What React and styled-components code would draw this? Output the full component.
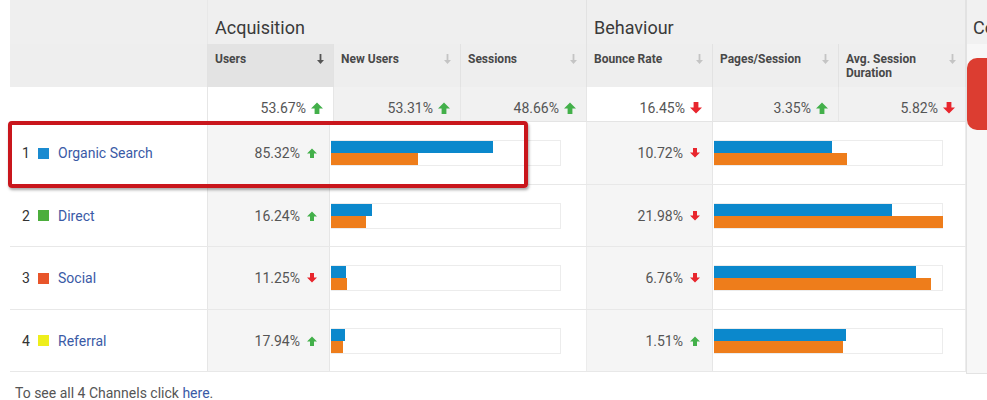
import React from 'react';
import styled, { createGlobalStyle } from 'styled-components';

const Global = createGlobalStyle`
  html, body { margin: 0; padding: 0; background: #fff; }
  body { font-family: Roboto, "Liberation Sans", Arial, sans-serif; width: 987px; height: 400px; overflow: hidden; }
  #root { width: 987px; height: 400px; }
`;

const Page = styled.div`
  position: relative;
  width: 987px;
  height: 400px;
  overflow: hidden;
`;

const Top = styled.div`
  display: flex;
  padding-left: 10px;
`;

const Table = styled.div`
  width: 956px;
  flex: none;
  display: flex;
  flex-direction: column;
`;

const GroupRow = styled.div`
  display: grid;
  grid-template-columns: 198px 379px 379px;
  height: 44px;
  background: #efefef;
`;

const GroupCell = styled.div`
  box-sizing: border-box;
  border-right: 1px solid #e2e2e2;
  font-size: 18px;
  color: #3a3a3a;
  padding: 17px 0 0 7px;
  &:first-child { border-right: 1px solid #e8e8e8; }
`;

const HeaderRow = styled.div`
  display: grid;
  grid-template-columns: 198px 126px 127px 126px 126px 126px 127px;
  height: 43px;
  background: #eeeeee;
`;

const HeadCell = styled.div`
  box-sizing: border-box;
  border-right: 1px solid #e2e2e2;
  background: ${p => (p.$active ? '#e3e3e3' : '#eeeeee')};
  display: flex;
  justify-content: space-between;
  align-items: flex-start;
  padding: 8px 9px 0 7px;
  font-size: 12px;
  font-weight: 700;
  line-height: 14px;
  color: #484848;
`;

const SummaryRow = styled.div`
  display: grid;
  grid-template-columns: 198px 126px 127px 126px 126px 126px 127px;
  height: 35px;
  border-bottom: 1px solid #e4e4e4;
  box-sizing: border-box;
`;

const SumCell = styled.div`
  box-sizing: border-box;
  border-right: 1px solid #e6e6e6;
  background: ${p => (p.$white ? '#ffffff' : '#f1f1f1')};
  display: flex;
  align-items: center;
  justify-content: flex-end;
  gap: 5px;
  padding: 8px 10px 0 0;
  font-size: 14px;
  color: #555;
`;

const BodyRow = styled.div`
  display: grid;
  grid-template-columns: 198px 122px 257px 126px 253px;
  height: ${p => p.$h}px;
  border-bottom: 1px solid #e8e8e8;
  box-sizing: border-box;
`;

const LabelCell = styled.div`
  box-sizing: border-box;
  border-right: 1px solid #e6e6e6;
  background: #fff;
  display: flex;
  align-items: center;
  padding: 0 0 0 12px;
  font-size: 14px;
  color: #333;
`;

const Num = styled.span`
  width: 16px;
`;

const Swatch = styled.span`
  width: 11px;
  height: 11px;
  background: ${p => p.$c};
  margin-right: 9px;
  flex: none;
`;

const Link = styled.a`
  color: #3a5aa6;
  text-decoration: none;
`;

const PctCell = styled.div`
  box-sizing: border-box;
  border-right: 1px solid #e6e6e6;
  background: #f5f5f5;
  display: flex;
  align-items: center;
  justify-content: flex-end;
  gap: 7px;
  padding: 0 12px 0 0;
  font-size: 14px;
  color: #555;
`;

const BarCell = styled.div`
  box-sizing: border-box;
  border-right: 1px solid #ececec;
  background: #fff;
  display: flex;
  align-items: center;
  padding-left: 1px;
`;

const BarBox = styled.div`
  width: ${p => p.$w}px;
  height: 26px;
  box-sizing: border-box;
  border: 1px solid #ececec;
  border-left: none;
  display: flex;
  flex-direction: column;
  justify-content: center;
`;

const Bar = styled.div`
  height: 12px;
  background: ${p => (p.$kind === 'a' ? '#0b88cc' : '#ee7d1b')};
`;

const Side = styled.div`
  flex: 1;
  min-width: 0;
  display: flex;
  flex-direction: column;
  border-left: 1px solid #e2e2e2;
  overflow: hidden;
`;

const SideHead = styled.div`
  height: 44px;
  background: #f1f1f1;
  font-size: 18px;
  color: #3a3a3a;
  padding: 17px 0 0 6px;
  box-sizing: border-box;
  white-space: nowrap;
`;

const SidePanel = styled.div`
  height: 330px;
  background: #f7f7f7;
  border-bottom: 1px solid #e3e3e3;
  box-sizing: border-box;
  padding: 14px 0 0 0;
`;

const RedButton = styled.div`
  height: 72px;
  width: 60px;
  background: #dc3d31;
  border-radius: 10px;
`;

const Footer = styled.div`
  padding: 11px 0 0 15px;
  font-size: 14px;
  color: #555;
`;

const Highlight = styled.div`
  position: absolute;
  left: 8px;
  top: 121px;
  width: 520px;
  height: 67px;
  box-sizing: border-box;
  border: 4px solid #c9161c;
  border-radius: 4px;
  box-shadow: 1px 2px 3px rgba(0, 0, 0, 0.35);
  pointer-events: none;
`;

const Trend = ({ up, size = 11 }) => (
  <svg width={size} height={size} viewBox="0 0 10 10" style={{ flex: 'none' }}>
    {up ? (
      <path d="M5 0.5 L10 5.5 L7 5.5 L7 10 L3 10 L3 5.5 L0 5.5 Z" fill="#43b04a" />
    ) : (
      <path d="M3 0 L7 0 L7 4.5 L10 4.5 L5 9.5 L0 4.5 L3 4.5 Z" fill="#e8262d" />
    )}
  </svg>
);

const Sort = ({ active }) => (
  <svg width="7" height="10" viewBox="0 0 7 10" style={{ flex: 'none', marginTop: 2 }}>
    <path d="M2.6 0 H4.4 V6 H7 L3.5 10 L0 6 H2.6 Z" fill={active ? '#555' : '#c4c4c4'} />
  </svg>
);

const headers = [
  ['Users', true],
  ['New Users', false],
  ['Sessions', false],
  ['Bounce Rate', false],
  ['Pages/Session', false],
  ['Avg. Session Duration', false],
];

const summary = [
  ['53.67%', true, true],
  ['53.31%', true, false],
  ['48.66%', true, false],
  ['16.45%', false, true],
  ['3.35%', true, false],
  ['5.82%', false, false],
];

const rows = [
  { n: 1, name: 'Organic Search', c: '#1a8bd0', u: '85.32%', uUp: true, a: [162, 87], b: '10.72%', bUp: false, bb: [118, 133], h: 63 },
  { n: 2, name: 'Direct', c: '#4cae3c', u: '16.24%', uUp: true, a: [41, 35], b: '21.98%', bUp: false, bb: [178, 229], h: 62 },
  { n: 3, name: 'Social', c: '#e8552a', u: '11.25%', uUp: false, a: [15, 16], b: '6.76%', bUp: false, bb: [202, 217], h: 63 },
  { n: 4, name: 'Referral', c: '#eeee1c', u: '17.94%', uUp: true, a: [14, 12], b: '1.51%', bUp: true, bb: [132, 129], h: 62 },
];

export default function App() {
  return (
    <Page>
      <Global />
      <Top>
        <Table>
          <GroupRow>
            <GroupCell />
            <GroupCell>Acquisition</GroupCell>
            <GroupCell>Behaviour</GroupCell>
          </GroupRow>
          <HeaderRow>
            <HeadCell />
            {headers.map(([t, act]) => (
              <HeadCell key={t} $active={act}>
                <span>{t}</span>
                <Sort active={act} />
              </HeadCell>
            ))}
          </HeaderRow>
          <SummaryRow>
            <SumCell $white />
            {summary.map(([v, up, white]) => (
              <SumCell key={v} $white={white}>
                {v}
                <Trend up={up} size={12} />
              </SumCell>
            ))}
          </SummaryRow>
          {rows.map(r => (
            <BodyRow key={r.n} $h={r.h}>
              <LabelCell>
                <Num>{r.n}</Num>
                <Swatch $c={r.c} />
                <Link href="#">{r.name}</Link>
              </LabelCell>
              <PctCell>
                {r.u}
                <Trend up={r.uUp} size={10} />
              </PctCell>
              <BarCell>
                <BarBox $w={230}>
                  <Bar $kind="a" style={{ width: r.a[0] }} />
                  <Bar $kind="b" style={{ width: r.a[1] }} />
                </BarBox>
              </BarCell>
              <PctCell>
                {r.b}
                <Trend up={r.bUp} size={10} />
              </PctCell>
              <BarCell>
                <BarBox $w={229}>
                  <Bar $kind="a" style={{ width: r.bb[0] }} />
                  <Bar $kind="b" style={{ width: r.bb[1] }} />
                </BarBox>
              </BarCell>
            </BodyRow>
          ))}
        </Table>
        <Side>
          <SideHead>Conversions</SideHead>
          <SidePanel>
            <RedButton />
          </SidePanel>
        </Side>
      </Top>
      <Footer>
        To see all 4 Channels click <Link href="#">here</Link>.
      </Footer>
      <Highlight />
    </Page>
  );
}
